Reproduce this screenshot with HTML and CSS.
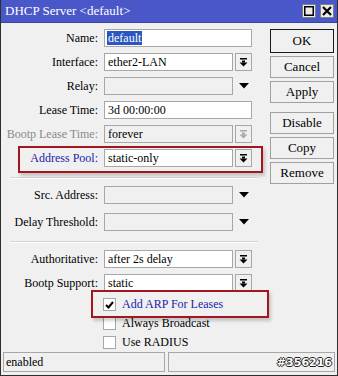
FILE: index.html
```html
<!DOCTYPE html>
<html lang="en">
<head>
    <meta charset="UTF-8">
    <title>DHCP Server &lt;default&gt;</title>
    <link rel="stylesheet" href="styles.css">
</head>
<body>
    <div class="window">
        <div class="titlebar">
            <span class="title">DHCP Server &lt;default&gt;</span>
            <div class="title-buttons">
                <span class="tb-btn"><svg width="10" height="10" viewBox="0 0 10 10"><rect x="0.75" y="0.75" width="8.5" height="8.5" fill="none" stroke="#000" stroke-width="1.5"/></svg></span>
                <span class="tb-btn"><svg width="10" height="10" viewBox="0 0 10 10"><path d="M1 1 L9 9 M9 1 L1 9" stroke="#000" stroke-width="2.2"/></svg></span>
            </div>
        </div>

        <div class="main">
            <div class="form">
                <div class="row">
                    <label>Name:</label>
                    <div class="field"><div class="input"><span class="selected">default</span></div></div>
                </div>
                <div class="row">
                    <label>Interface:</label>
                    <div class="field"><div class="input">ether2-LAN</div><span class="drop"><svg width="9" height="9" viewBox="0 0 9 9"><rect x="1" y="0" width="7" height="1.5"/><rect x="3" y="2.5" width="3" height="2"/><path d="M0.5 4.5 H8.5 L4.5 8.5 Z"/></svg></span></div>
                </div>
                <div class="row">
                    <label>Relay:</label>
                    <div class="field"><div class="input off"></div><span class="tri"><svg width="10" height="6" viewBox="0 0 10 6"><path d="M0 0 H10 L5 5.5 Z"/></svg></span></div>
                </div>
                <div class="row">
                    <label>Lease Time:</label>
                    <div class="field"><div class="input">3d 00:00:00</div></div>
                </div>
                <div class="row">
                    <label class="muted">Bootp Lease Time:</label>
                    <div class="field"><div class="input off">forever</div><span class="drop dim"><svg width="9" height="9" viewBox="0 0 9 9"><rect x="1" y="0" width="7" height="1.5"/><rect x="3" y="2.5" width="3" height="2"/><path d="M0.5 4.5 H8.5 L4.5 8.5 Z"/></svg></span></div>
                </div>
                <div class="row marked pool">
                    <label class="blue">Address Pool:</label>
                    <div class="field"><div class="input">static-only</div><span class="drop"><svg width="9" height="9" viewBox="0 0 9 9"><rect x="1" y="0" width="7" height="1.5"/><rect x="3" y="2.5" width="3" height="2"/><path d="M0.5 4.5 H8.5 L4.5 8.5 Z"/></svg></span></div>
                </div>

                <div class="separator"></div>

                <div class="row">
                    <label>Src. Address:</label>
                    <div class="field"><div class="input off"></div><span class="tri"><svg width="10" height="6" viewBox="0 0 10 6"><path d="M0 0 H10 L5 5.5 Z"/></svg></span></div>
                </div>
                <div class="row lower">
                    <label>Delay Threshold:</label>
                    <div class="field"><div class="input off"></div><span class="tri"><svg width="10" height="6" viewBox="0 0 10 6"><path d="M0 0 H10 L5 5.5 Z"/></svg></span></div>
                </div>

                <div class="separator"></div>

                <div class="row">
                    <label>Authoritative:</label>
                    <div class="field"><div class="input">after 2s delay</div><span class="drop"><svg width="9" height="9" viewBox="0 0 9 9"><rect x="1" y="0" width="7" height="1.5"/><rect x="3" y="2.5" width="3" height="2"/><path d="M0.5 4.5 H8.5 L4.5 8.5 Z"/></svg></span></div>
                </div>
                <div class="row">
                    <label>Bootp Support:</label>
                    <div class="field"><div class="input">static</div><span class="drop"><svg width="9" height="9" viewBox="0 0 9 9"><rect x="1" y="0" width="7" height="1.5"/><rect x="3" y="2.5" width="3" height="2"/><path d="M0.5 4.5 H8.5 L4.5 8.5 Z"/></svg></span></div>
                </div>

                <div class="checks">
                    <div class="check marked arp">
                        <span class="box"><svg width="9" height="8" viewBox="0 0 9 8"><path d="M1 4 L3.5 6.5 L8 1" fill="none" stroke="#000" stroke-width="2"/></svg></span>
                        <span class="blue">Add ARP For Leases</span>
                    </div>
                    <div class="check">
                        <span class="box"></span>
                        <span>Always Broadcast</span>
                    </div>
                    <div class="check">
                        <span class="box"></span>
                        <span>Use RADIUS</span>
                    </div>
                </div>
            </div>

            <div class="actions">
                <button class="default">OK</button>
                <button>Cancel</button>
                <button>Apply</button>
                <button class="spaced">Disable</button>
                <button>Copy</button>
                <button>Remove</button>
            </div>
        </div>

        <div class="statusbar">
            <div class="status-cell">enabled</div>
            <div class="status-cell wide"><span class="stamp">#356216</span></div>
        </div>
    </div>
</body>
</html>
```

FILE: styles.css
```css
/* Page */
body {
    margin: 0;
    padding: 0;
    font-family: 'Liberation Serif', 'Times New Roman', serif;
    font-size: 12px;
    color: #000000;
    background: #f0f0f0;
}

/* Window frame */
.window {
    width: 338px;
    height: 376px;
    box-sizing: border-box;
    border: 1px solid #2e2e2e;
    border-top: none;
    background: #f0f0f0;
    display: flex;
    flex-direction: column;
}

.titlebar {
    height: 22px;
    background: #4a57c9;
    display: flex;
    align-items: center;
    justify-content: space-between;
    padding: 0 3px 0 4px;
    border-bottom: 1px solid #3a44a0;
}

.title {
    color: #ffffff;
    font-size: 13px;
}

.title-buttons {
    display: flex;
    gap: 4px;
}

.tb-btn {
    width: 14px;
    height: 14px;
    box-sizing: border-box;
    background: #ececec;
    border: 1px solid #808080;
    display: flex;
    align-items: center;
    justify-content: center;
}

/* Main area */
.main {
    flex: 1;
    display: flex;
    padding-top: 6px;
}

.form {
    width: 266px;
    padding-left: 1px;
}

.row {
    display: grid;
    grid-template-columns: 96px 148px;
    column-gap: 6px;
    align-items: center;
    height: 18px;
    margin-bottom: 6px;
}

.row.lower {
    margin-top: 9px;
}

.row label {
    text-align: right;
    white-space: nowrap;
}

.muted {
    color: #8a8a8a;
}

.blue {
    color: #1c1ca8;
}

.field {
    display: flex;
    align-items: center;
    gap: 2px;
    height: 18px;
}

.input {
    flex: 1;
    height: 18px;
    box-sizing: border-box;
    border: 1px solid #a7a7a7;
    background: #ffffff;
    padding: 0 3px;
    line-height: 16px;
    white-space: nowrap;
    overflow: hidden;
}

.input.off {
    background: #f0f0f0;
}

.selected {
    background: #2a56c0;
    color: #ffffff;
    margin-left: -1px;
    padding: 0 1px;
}

.drop {
    width: 17px;
    height: 18px;
    box-sizing: border-box;
    border: 1px solid #a7a7a7;
    background: #f0f0f0;
    display: flex;
    align-items: center;
    justify-content: center;
}

.drop svg {
    fill: #000000;
}

.drop.dim svg {
    fill: #a8a8a8;
}

.tri {
    width: 17px;
    display: flex;
    align-items: center;
    justify-content: center;
}

/* Red highlight boxes */
.marked {
    position: relative;
}

.marked::after {
    content: "";
    position: absolute;
    border: 2px solid #a3161f;
    box-shadow: 2px 3px 3px rgba(0, 0, 0, 0.18);
    pointer-events: none;
}

.pool::after {
    left: 16px;
    right: 5px;
    top: -3px;
    bottom: -6px;
}

.separator {
    height: 0;
    border-top: 1px solid #d4d4d4;
    border-bottom: 1px solid #ffffff;
    margin: 10px 10px 7px 8px;
}

/* Checkboxes */
.checks {
    padding-left: 101px;
    margin-top: -3px;
}

.check {
    display: flex;
    align-items: center;
    gap: 6px;
    height: 19px;
}

.box {
    width: 13px;
    height: 13px;
    box-sizing: border-box;
    border: 1px solid #a7a7a7;
    background: #ffffff;
    display: flex;
    align-items: center;
    justify-content: center;
}

.arp::after {
    left: -12px;
    right: -1px;
    top: -5px;
    bottom: -4px;
}

/* Action buttons */
.actions {
    display: flex;
    flex-direction: column;
    gap: 3px;
    padding-left: 2px;
}

.actions button {
    width: 64px;
    height: 22px;
    font-family: 'Liberation Serif', 'Times New Roman', serif;
    font-size: 13px;
    background: #f0f0f0;
    border: 1px solid #a0a0a0;
    padding: 0;
    color: #000000;
}

.actions button.default {
    border: 1px solid #1a1a1a;
    height: 24px;
}

.actions button.spaced {
    margin-top: 6px;
}

/* Status bar */
.statusbar {
    display: flex;
    gap: 3px;
    padding: 0 2px 3px 2px;
    height: 20px;
}

.status-cell {
    width: 162px;
    box-sizing: border-box;
    border: 1px solid #a7a7a7;
    padding: 0 2px;
    line-height: 18px;
}

.status-cell.wide {
    flex: 1;
    text-align: right;
}

.stamp {
    font-family: 'DejaVu Sans', sans-serif;
    font-weight: bold;
    font-size: 11px;
    color: #ffffff;
    text-shadow: 1px 0 0 #222, -1px 0 0 #222, 0 1px 0 #222, 0 -1px 0 #222;
}
```
